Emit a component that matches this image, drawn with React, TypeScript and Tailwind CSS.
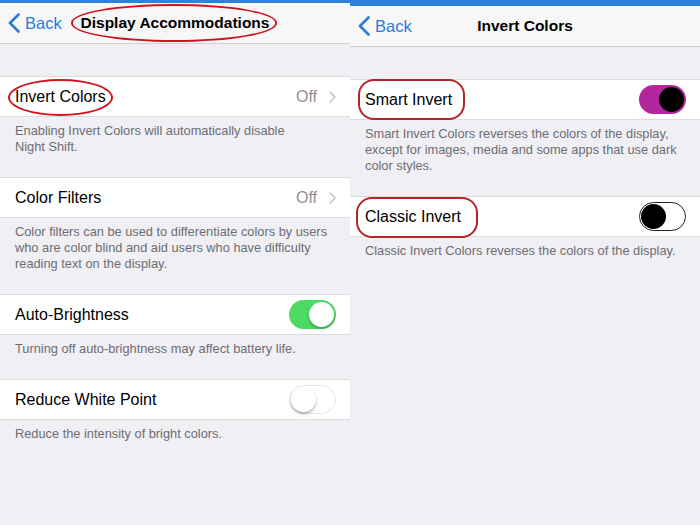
function Circled({children, ring}: {children: React.ReactNode; ring: string}) {
  return (
    <span className="relative inline-block">
      {children}
      <span className={'absolute ' + ring} />
    </span>
  )
}

function Toggle({kind}: {kind: 'green' | 'off' | 'magenta' | 'black'}) {
  if (kind === 'green')
    return (
      <div className="w-[47px] h-[29px] rounded-full bg-[#4cd964] flex items-center justify-end p-[2px]">
        <div className="w-[25px] h-[25px] rounded-full bg-white shadow-[0_2px_3px_rgba(0,0,0,0.25)]" />
      </div>
    )
  if (kind === 'off')
    return (
      <div className="w-[47px] h-[29px] rounded-full bg-white border border-[#e5e5ea] flex items-center p-[1px]">
        <div className="w-[25px] h-[25px] rounded-full bg-white shadow-[0_2px_3px_rgba(0,0,0,0.3)]" />
      </div>
    )
  if (kind === 'magenta')
    return (
      <div className="w-[47px] h-[29px] rounded-full bg-[#b3269d] flex items-center justify-end p-[2px]">
        <div className="w-[25px] h-[25px] rounded-full bg-black" />
      </div>
    )
  return (
    <div className="w-[47px] h-[29px] rounded-full bg-white border-[1.5px] border-[#222] flex items-center p-[1px]">
      <div className="w-[25px] h-[25px] rounded-full bg-black" />
    </div>
  )
}

function Row({label, children}: {label: React.ReactNode; children?: React.ReactNode}) {
  return (
    <div className="bg-white border-y border-[#dcdce0] h-[41px] pl-[15px] pr-[14px] flex items-center justify-between">
      <span className="text-[16px] text-black">{label}</span>
      {children}
    </div>
  )
}

function Off() {
  return (
    <span className="flex items-center gap-[12px] text-[16px] text-[#8e8e93]">
      Off
      <svg width="7" height="12" viewBox="0 0 7 12" fill="none">
        <path d="M1 1l5 5-5 5" stroke="#c4c4c8" strokeWidth="1.5" strokeLinecap="round" strokeLinejoin="round" />
      </svg>
    </span>
  )
}

function Note({children}: {children: React.ReactNode}) {
  return (
    <p className="pl-[15px] pr-[12px] pt-[6px] pb-[22px] text-[12.8px] leading-[16px] text-[#6d6d72]">{children}</p>
  )
}

function NavBar({title}: {title: React.ReactNode}) {
  return (
    <div className="relative h-[41px] bg-[#f7f7f8] border-b border-[#cfcfd3] flex items-center justify-center">
      <div className="absolute left-[8px] top-0 bottom-0 flex items-center gap-[5px] text-[#2a7bd6] text-[16.5px]">
        <svg width="12" height="20" viewBox="0 0 12 20" fill="none">
          <path d="M10.5 1.5L2 10l8.5 8.5" stroke="#2a7bd6" strokeWidth="2.6" strokeLinecap="round" strokeLinejoin="round" />
        </svg>
        Back
      </div>
      <span className="text-[15.5px] font-bold text-black">{title}</span>
    </div>
  )
}

export default function App() {
  return (
    <div
      className="w-[700px] h-[525px] flex bg-[#efeff4] overflow-hidden"
      style={{fontFamily: '"Liberation Sans", Arial, sans-serif'}}
    >
      <section className="w-[350px] flex flex-col">
        <div className="h-[3px] bg-[#2f82dc]" />
        <NavBar
          title={
            <Circled ring="-left-[10px] -right-[8px] -top-[7px] -bottom-[7px] border-[2.5px] border-[#d0141c] rounded-[50%]">
              Display Accommodations
            </Circled>
          }
        />
        <div className="h-[32px]" />
        <Row
          label={
            <Circled ring="-left-[7px] -right-[7px] -top-[6px] -bottom-[7px] border-[2.5px] border-[#d0141c] rounded-[50%]">
              Invert Colors
            </Circled>
          }
        >
          <Off />
        </Row>
        <Note>
          Enabling Invert Colors will automatically disable
          <br />
          Night Shift.
        </Note>
        <Row label="Color Filters">
          <Off />
        </Row>
        <Note>
          Color filters can be used to differentiate colors by users who are color blind and aid users who have
          difficulty reading text on the display.
        </Note>
        <Row label="Auto-Brightness">
          <Toggle kind="green" />
        </Row>
        <Note>Turning off auto-brightness may affect battery life.</Note>
        <Row label="Reduce White Point">
          <Toggle kind="off" />
        </Row>
        <Note>Reduce the intensity of bright colors.</Note>
      </section>

      <section className="w-[350px] flex flex-col">
        <div className="h-[6px] bg-[#2f82dc]" />
        <NavBar title="Invert Colors" />
        <div className="h-[32px]" />
        <Row
          label={
            <Circled ring="-left-[7px] -right-[13px] -top-[9px] -bottom-[8px] border-2 border-[#b3242b] rounded-[16px]">
              Smart Invert
            </Circled>
          }
        >
          <Toggle kind="magenta" />
        </Row>
        <Note>
          Smart Invert Colors reverses the colors of the display, except for images, media and some apps that use
          dark color styles.
        </Note>
        <Row
          label={
            <Circled ring="-left-[9px] -right-[17px] -top-[8px] -bottom-[9px] border-2 border-[#b3242b] rounded-[16px]">
              Classic Invert
            </Circled>
          }
        >
          <Toggle kind="black" />
        </Row>
        <Note>Classic Invert Colors reverses the colors of the display.</Note>
      </section>
    </div>
  )
}
